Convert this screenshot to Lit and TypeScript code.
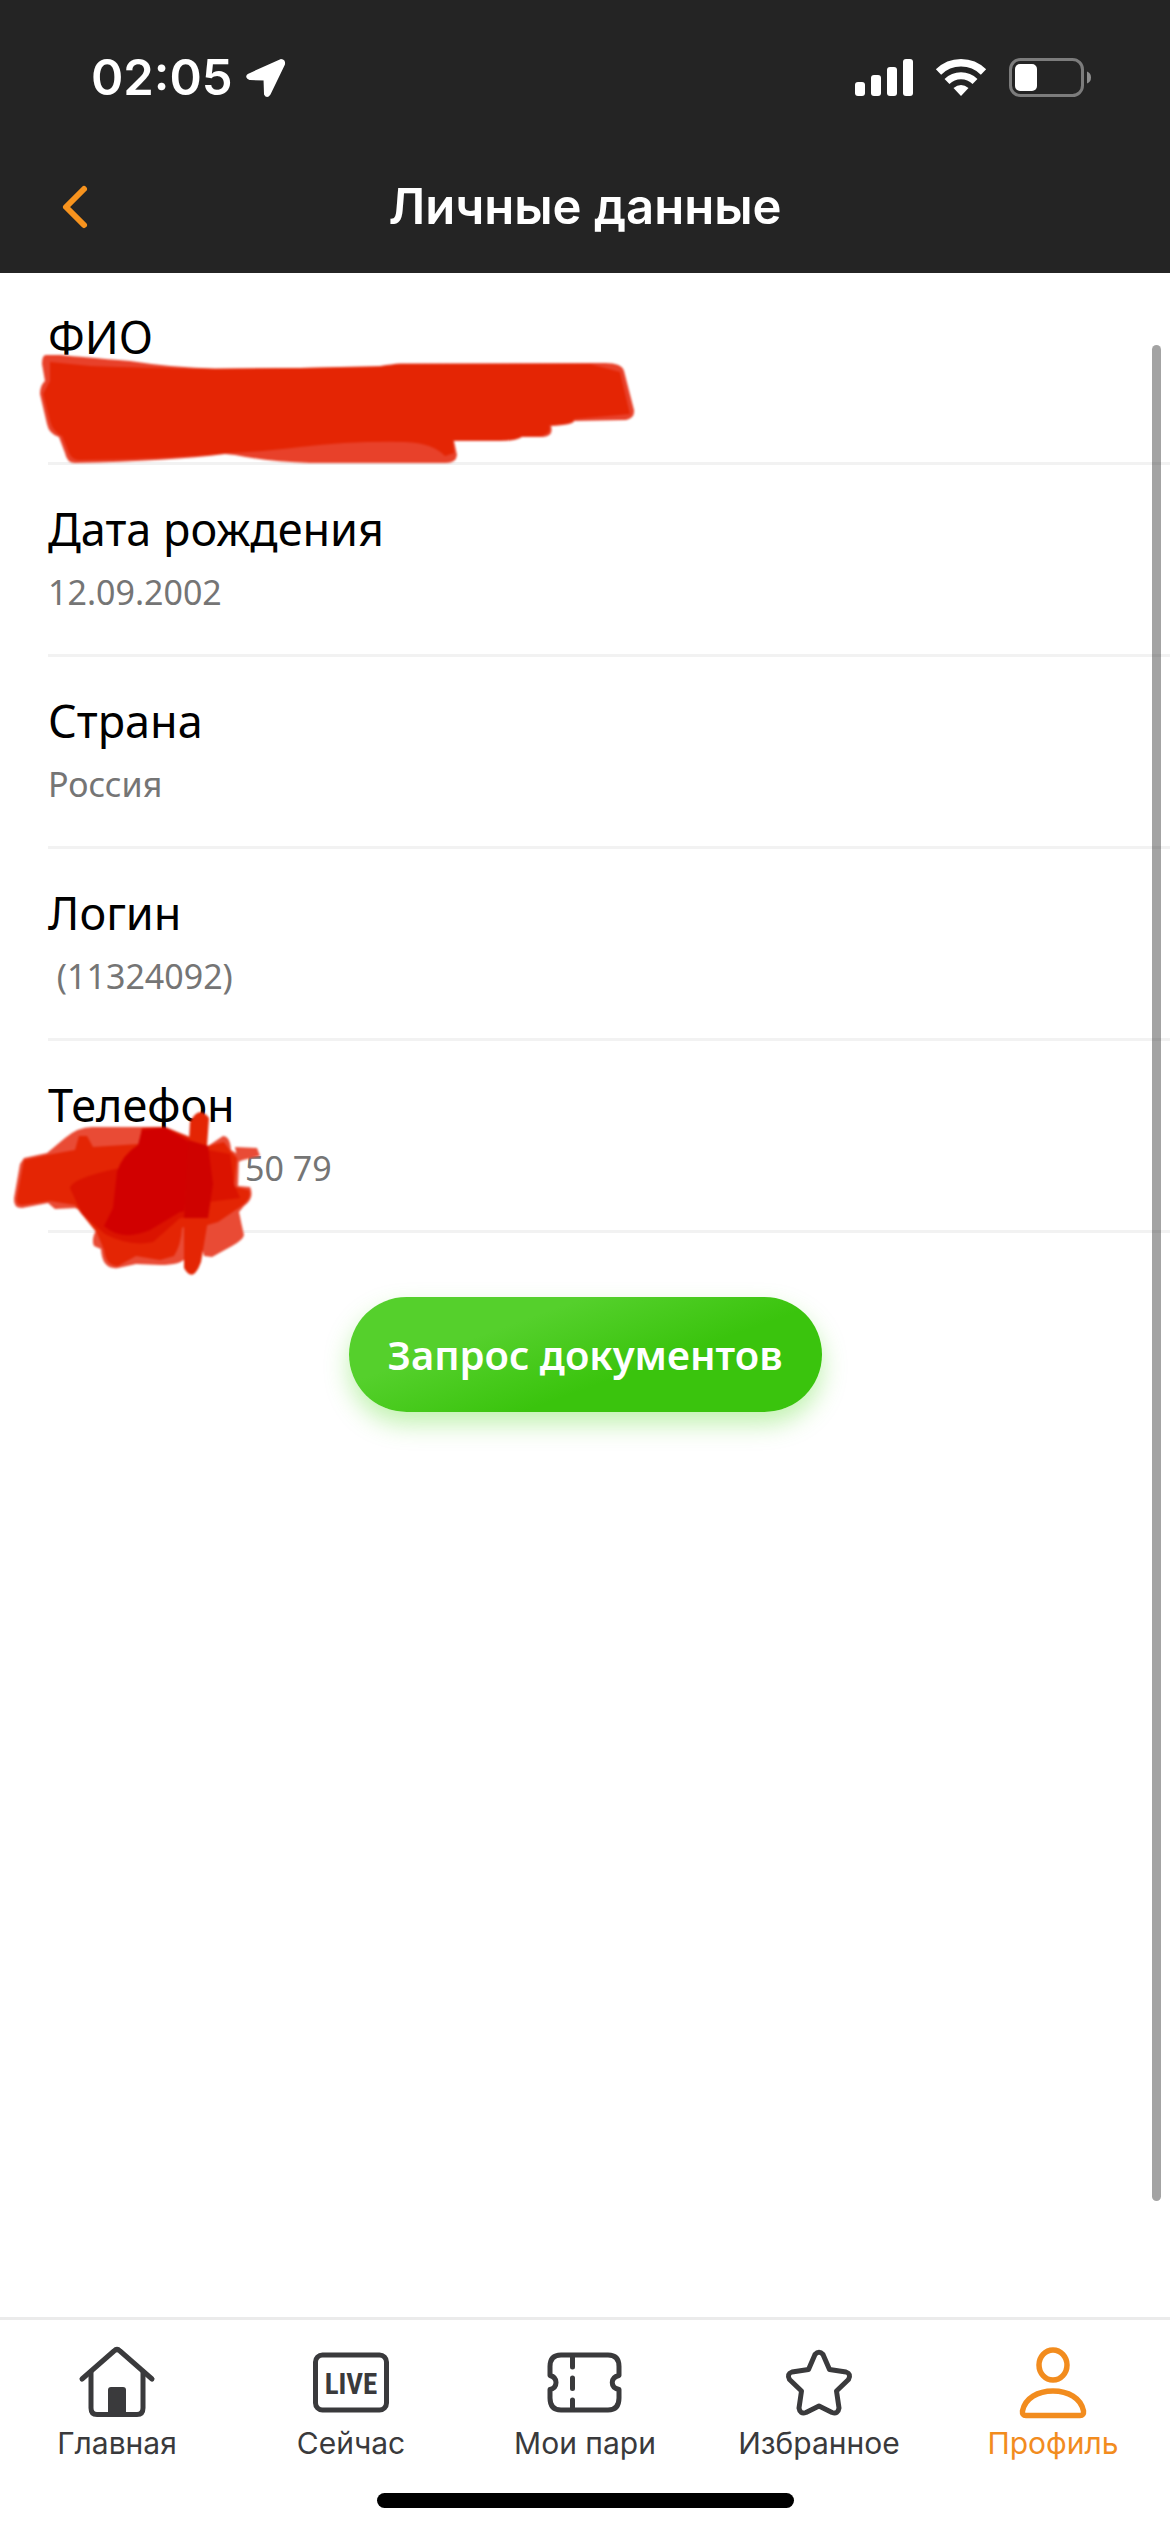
import { LitElement, html, css, svg, nothing } from "lit";
import { customElement } from "lit/decorators.js";
import { classMap } from "lit/directives/class-map.js";

type Field = { label: string; value: string; mask?: "name" | "phone" };
type Tab = { label: string; icon: unknown; active?: boolean };

const fields: Field[] = [
  { label: "ФИО", value: "", mask: "name" },
  { label: "Дата рождения", value: "12.09.2002" },
  { label: "Страна", value: "Россия" },
  { label: "Логин", value: " (11324092)" },
  { label: "Телефон", value: "50 79", mask: "phone" },
];

const tabs: Tab[] = [
  {
    label: "Главная",
    icon: svg`
      <g fill="none" stroke="currentColor" stroke-width="5" stroke-linecap="round" stroke-linejoin="round">
        <path d="M5 38 L37 10 Q40 7 43 10 L75 38"/>
        <path d="M14 31 V67 Q14 73.500 20 73.500 H60 Q66 73.500 66 67 V31"/>
      </g>
      <path d="M31 73 V49 Q31 46 34 46 H46 Q49 46 49 49 V73 Z" fill="currentColor"/>`,
  },
  {
    label: "Сейчас",
    icon: svg`
      <rect x="4.500" y="14" width="71" height="55" rx="7" fill="none" stroke="currentColor" stroke-width="5"/>
      <text class="live" x="40" y="53" text-anchor="middle" fill="currentColor">LIVE</text>`,
  },
  {
    label: "Мои пари",
    icon: svg`
      <g fill="none" stroke="currentColor" stroke-width="5" stroke-linecap="round" stroke-linejoin="round">
        <path d="M16 14 H63 Q74 14 74 25.500 V34.500 C65 36.500 65 46.500 74 48.500 V57 Q74 69 63 69 H16 Q5 69 5 57 V48.500 C13 46.500 13 36.500 5 34.500 V25.500 Q5 14 16 14 Z"/>
        <path d="M27.500 16 V26 M27.500 37 V47.500 M27.500 59 V68"/>
      </g>`,
  },
  {
    label: "Избранное",
    icon: svg`
      <path d="M36 13.500 Q40 9 44 13.500 L50.500 28.500 L67 31 Q72.500 33 69.500 38.500 L57.500 50 L60 67 Q59 73.500 53 71.500 L40 65 L27 71.500 Q21 73.500 20 67 L22.500 50 L10.500 38.500 Q7.500 33 13 31 L29.500 28.500 Z" fill="none" stroke="currentColor" stroke-width="5" stroke-linejoin="round"/>`,
  },
  {
    label: "Профиль",
    active: true,
    icon: svg`
      <g fill="none" stroke="currentColor" stroke-width="5.500" stroke-linejoin="round">
        <ellipse cx="40" cy="24" rx="14" ry="15"/>
        <path d="M13 74.500 Q9 74.500 9.500 70 C12 57 25 50 40 50 C55 50 68 57 70.500 70 Q71 74.500 67 74.500 Z"/>
      </g>`,
  },
];

const nameMask = html`
  <svg class="scribble scribble-name" viewBox="0 340 660 140" aria-hidden="true">
    <g class="soft">
      <path fill="#e8412a" d="M46 355 L60 355 Q82 357 130 361 Q175 368 215 368.500 L300 368 L380 366 Q392 364 400 363.500 L605 363 Q622 363 624 371 L634 410 Q635 418 626 420 L574 421 Q574 425 551 426 Q554 436 543 437 L522 437 Q516 441 500 441 L454 441 L457 455 Q456 463 446 463 L310 463 Q270 462 235 455 L225 454 Q170 461 75 463 Q67 463 65 453 L59 437 Q49 434 47 424 L40 394 Q40 385 45 381 L42 364 Q42 355 46 355 Z"/>
      <path fill="#e42504" d="M50 362 L90 366 Q140 368 215 369 L300 368 L380 367 L400 364 L590 364 L620 372 L630 414 L574 419 Q574 424 549 425 Q552 434 540 436 L522 436 Q516 440 500 440 L453 440 L454 453 L445 456 Q433 443 405 442 Q350 441 300 447 Q260 452 228 453 Q170 459 78 460 Q70 459 67 448 L62 436 Q53 432 50 421 L43 394 L50 381 Z"/>
    </g>
  </svg>`;

const phoneMask = html`
  <svg class="scribble scribble-phone" viewBox="0 1100 300 190" aria-hidden="true">
    <g class="soft" transform="translate(0 1100)">
      <path fill="#e94b35" d="M24 58 L47 53 L65 38 Q78 27 92 27 L165 27 L188 36 L208 46 L223 36 Q230 36 231 50 L239 55 L238 86 L250 87 Q255 98 244 106 L239 112 Q241 122 244 135 Q243 140 232 146 L212 157 L204 156 L198 130 L185 158 Q182 165 160 165 L136 164 L118 168 Q102 170 101 149 L94 146 Q91 140 96 130 L80 110 L75 108 L55 109 L48 103 L22 108 Q13 108 14 98 L20 64 Z"/>
      <path fill="#e42504" d="M24 60 L47 55 L75 50 L79 36 L87 36 L93 47 L139 44 L142 28 L165 27 L188 37 L208 46 L224 42 L231 52 L237 58 L234 87 L249 90 Q252 98 243 105 L218 122 L204 126 L198 118 L182 128 Q181 145 174 156 L160 160 L136 156 L118 166 Q106 166 104 150 L97 133 L80 112 L75 105 L50 101 L22 105 Q15 105 17 96 Z"/>
      <path fill="#db1300" d="M139 45 L142 28 L165 27 L190 39 L208 50 L230 54 L234 84 L240 98 L208 102 L204 116 L180 118 L153 142 Q130 147 105 134 L82 114 L70 88 Q72 78 120 68 Z"/>
      <path fill="#d10000" d="M142 30 L165 28 L186 40 L209 66 L205 108 L180 112 L150 130 Q122 142 104 126 L113 108 L117 72 Q122 55 138 45 Z"/>
      <path fill="#e42504" d="M190 22 Q199 4 209 18 L207 46 L210 84 L207 126 L201 162 Q193 184 184 168 L184 118 L188 60 Z"/>
      <path fill="#cf0200" d="M188 40 L208 46 L213 84 L208 118 L184 118 Z"/>
      <path fill="#e94b35" d="M235 47 L257 48 L260 56 L243 60 L238 62 Z"/>
    </g>
  </svg>`;

@customElement("app-root")
export class AppRoot extends LitElement {
  static styles = css`
    :host {
      display: flex;
      flex-direction: column;
      position: relative;
      min-height: 100vh;
      overflow: hidden;
      background: #fff;
      color: #000;
      font-family: "Noto Sans", "Open Sans", sans-serif;
    }
    * {
      box-sizing: border-box;
    }
    svg {
      display: block;
      flex: none;
    }
    button {
      border: 0;
      padding: 0;
      background: none;
      font: inherit;
      color: inherit;
      cursor: pointer;
    }
    .header {
      background: #242424;
      color: #fff;
      font-family: Inter, sans-serif;
      font-weight: 600;
      font-size: 49px;
      line-height: 60px;
    }
    .status {
      display: flex;
      align-items: center;
      justify-content: space-between;
      height: 141px;
      padding: 14px 78px 0 91px;
    }
    .clock,
    .signals {
      display: flex;
      align-items: center;
    }
    .clock {
      gap: 12px;
    }
    .signals {
      gap: 22px;
    }
    .titlebar {
      display: grid;
      grid-template-columns: 150px 1fr 150px;
      align-items: center;
      height: 132px;
    }
    .back {
      display: flex;
      height: 100%;
      align-items: center;
      padding-left: 60px;
      color: #f7931e;
    }
    .title {
      margin: 0;
      font-size: 49px;
      font-weight: 600;
      text-align: center;
    }
    .fields {
      margin: 0;
      padding-left: 48px;
    }
    .field {
      display: flex;
      flex-direction: column;
      gap: 11px;
      position: relative;
      min-height: 192px;
      padding-top: 36px;
      border-bottom: 3px solid #f2f2f2;
    }
    .label {
      font-size: 45px;
      line-height: 56px;
    }
    .value {
      margin: 0;
      font-size: 34px;
      line-height: 48px;
      color: #757575;
      white-space: pre;
    }
    .value-masked {
      padding-left: 197px;
    }
    .scribble {
      position: absolute;
      left: -48px;
      pointer-events: none;
    }
    .scribble-name {
      top: 67px;
      width: 660px;
      height: 140px;
    }
    .scribble-phone {
      top: 59px;
      width: 300px;
      height: 190px;
    }
    .soft {
      filter: blur(1px);
    }
    .actions {
      display: flex;
      justify-content: center;
      padding: 64px 48px;
    }
    .request {
      height: 115px;
      padding: 0 39px;
      border-radius: 58px;
      background: linear-gradient(160deg, #55d02c 30%, #3ac40d 62%);
      box-shadow: 0 12px 24px rgba(76, 217, 30, 0.35);
      color: #fff;
      font-size: 40px;
      font-weight: 600;
      line-height: 56px;
    }
    .scrollbar {
      position: absolute;
      top: 345px;
      right: 9px;
      bottom: 331px;
      width: 9px;
      border-radius: 5px;
      background: rgba(0, 0, 0, 0.36);
    }
    .tabbar {
      margin-top: auto;
      border-top: 3px solid #ebebeb;
      padding-bottom: 24px;
      font-family: Inter, sans-serif;
    }
    .tabs {
      display: grid;
      grid-template-columns: repeat(5, 1fr);
      padding-top: 21px;
      height: 173px;
    }
    .tab {
      display: flex;
      flex-direction: column;
      align-items: center;
      gap: 2px;
      color: #3a3a3c;
      font-size: 30px;
      line-height: 40px;
      text-decoration: none;
    }
    .active {
      color: #f28c1e;
    }
    .live {
      font-family: "Liberation Sans Narrow", "Roboto Condensed", Roboto, sans-serif;
      font-weight: 700;
      font-size: 29px;
    }
    .home {
      width: 417px;
      height: 15px;
      margin: 0 auto;
      border-radius: 8px;
      background: #000;
    }
  `;

  private renderField(field: Field) {
    return html`
      <div class="field">
        <dt class="label">${field.label}</dt>
        <dd class=${classMap({ value: true, "value-masked": field.mask === "phone" })}>${field.value}</dd>
        ${field.mask === "name" ? nameMask : field.mask === "phone" ? phoneMask : nothing}
      </div>`;
  }

  private renderTab(tab: Tab) {
    return html`
      <a
        class=${classMap({ tab: true, active: !!tab.active })}
        href="#"
        aria-current=${tab.active ? "page" : nothing}
      >
        <svg width="80" height="80" viewBox="0 0 80 80" aria-hidden="true">${tab.icon}</svg>
        <span>${tab.label}</span>
      </a>`;
  }

  render() {
    return html`
      <header class="header">
        <div class="status">
          <div class="clock">
            <span>02:05</span>
            <svg width="42" height="42" viewBox="0 0 42 42" aria-hidden="true">
              <path
                d="M4 18 L36 3.500 Q39 3.500 38.500 7 L24 37 Q22 40 20.500 37 L20 22 L5 21.500 Q1 20 4 18 Z"
                fill="#fff"
                stroke="#fff"
                stroke-width="3"
                stroke-linejoin="round"
              />
            </svg>
          </div>
          <div class="signals">
            <svg width="58" height="37" viewBox="0 0 58 37" fill="#fff" aria-hidden="true">
              <rect x="0" y="23" width="10" height="14" rx="3" />
              <rect x="16" y="16" width="10" height="21" rx="3" />
              <rect x="32" y="8" width="10" height="29" rx="3" />
              <rect x="48" y="0" width="10" height="37" rx="3" />
            </svg>
            <svg width="52" height="37" viewBox="0 0 52 37" aria-hidden="true">
              <g fill="none" stroke="#fff">
                <path d="M3.500 13 A32 32 0 0 1 48.500 13" stroke-width="7.500" />
                <path d="M12 22.500 A20 20 0 0 1 40 22.500" stroke-width="7" />
              </g>
              <path d="M18.500 29 Q26 23 33.500 29 L26 37 Z" fill="#fff" />
            </svg>
            <svg width="83" height="39" viewBox="0 0 83 39" aria-hidden="true">
              <rect x="1.500" y="1.500" width="72" height="36" rx="10" fill="none" stroke="#7c7c7c" stroke-width="3" />
              <rect x="6" y="6" width="22" height="27" rx="5" fill="#fff" />
              <path d="M78 13.500 Q82 15 82 19.500 Q82 24 78 25.500 Z" fill="#8e8e8e" />
            </svg>
          </div>
        </div>
        <div class="titlebar">
          <button class="back" aria-label="Назад">
            <svg width="30" height="46" viewBox="0 0 30 46" aria-hidden="true">
              <path
                d="M24 5 L6 23 L24 41"
                fill="none"
                stroke="currentColor"
                stroke-width="6"
                stroke-linecap="round"
                stroke-linejoin="round"
              />
            </svg>
          </button>
          <h1 class="title">Личные данные</h1>
        </div>
      </header>
      <main>
        <dl class="fields">${fields.map((f) => this.renderField(f))}</dl>
        <div class="actions"><button class="request">Запрос документов</button></div>
      </main>
      <div class="scrollbar"></div>
      <nav class="tabbar">
        <div class="tabs">${tabs.map((t) => this.renderTab(t))}</div>
        <div class="home"></div>
      </nav>
    `;
  }
}
